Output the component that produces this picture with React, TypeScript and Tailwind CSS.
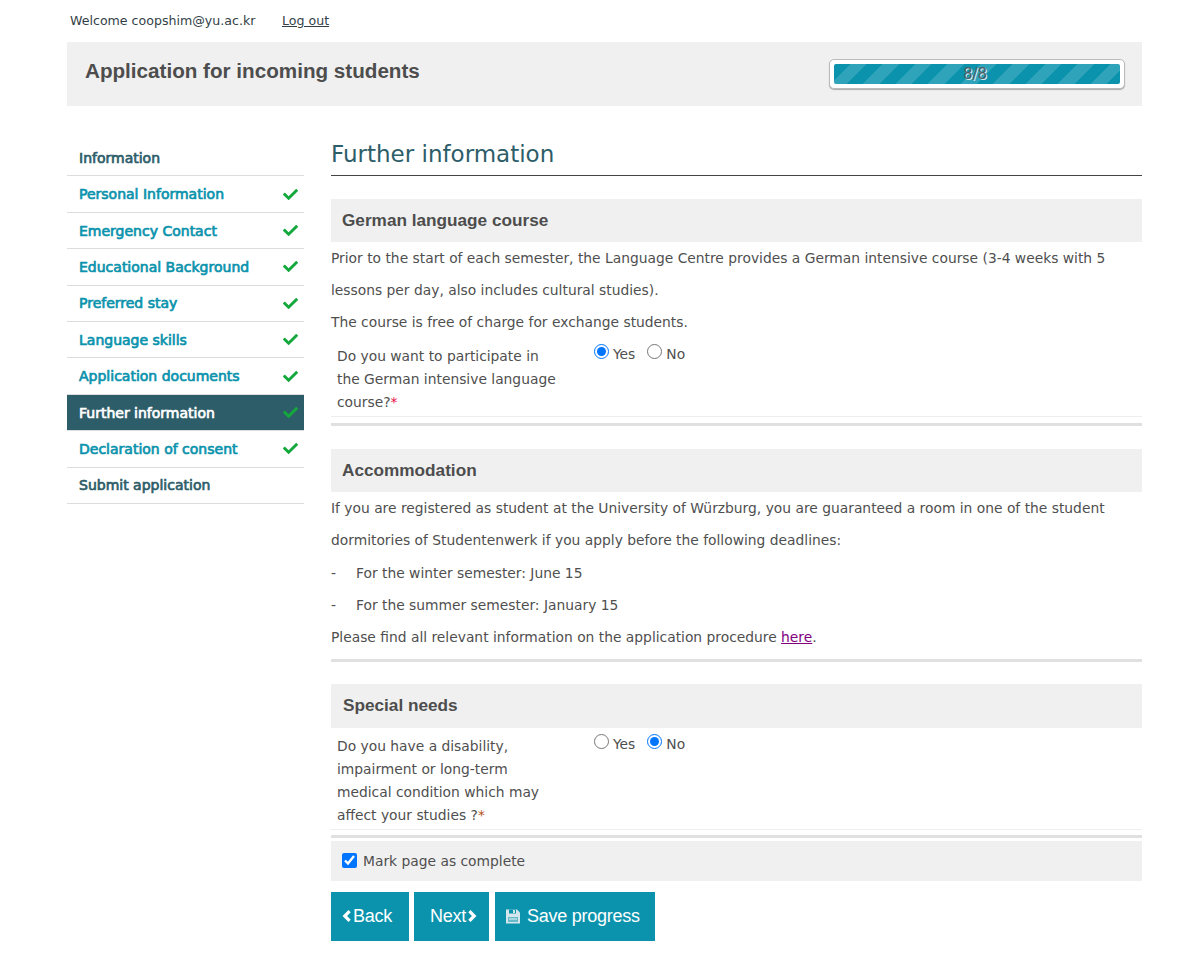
import { FaCheck } from "react-icons/fa";

const steps = [
  { label: "Information", done: false, link: false },
  { label: "Personal Information", done: true, link: true },
  { label: "Emergency Contact", done: true, link: true },
  { label: "Educational Background", done: true, link: true },
  { label: "Preferred stay", done: true, link: true },
  { label: "Language skills", done: true, link: true },
  { label: "Application documents", done: true, link: true },
  { label: "Further information", done: true, link: true, active: true },
  { label: "Declaration of consent", done: true, link: true },
  { label: "Submit application", done: false, link: false },
];

function SideItem({ label, done, link, active }: { label: string; done: boolean; link: boolean; active?: boolean }) {
  return (
    <div
      className={`flex h-[36.4px] items-center justify-between border-b border-[#dddddd] pl-3 pr-[6px] text-[14px] ${
        active ? "bg-[#2d5d69] text-white" : link ? "text-[#0b93ad]" : "text-[#2d5d69]"
      }`}
    >
      <span className="pt-[1px] [-webkit-text-stroke:0.7px_currentColor]">{label}</span>
      {done && <FaCheck size={15} className="text-[#14a83c]" />}
    </div>
  );
}

function SectionHead({ children, box = "h-[43px] pl-[11px]" }: { children: React.ReactNode; box?: string }) {
  return (
    <h2 className={`flex items-center bg-[#f0f0f0] font-['Liberation_Sans',sans-serif] text-[17.2px] font-bold text-[#4d4d4d] ${box}`}>
      {children}
    </h2>
  );
}

function Radio({ checked, label }: { checked: boolean; label: string }) {
  return (
    <label className="flex items-start gap-[4px]">
      <input type="radio" readOnly checked={checked} className="h-[15px] w-[15px] accent-[#0075ff]" />
      <span className="leading-[20px]">{label}</span>
    </label>
  );
}

function Question({ children, yes }: { children: React.ReactNode; yes: boolean }) {
  return (
    <div className="flex border-b border-[#eeeeee] pb-[2px]">
      <div className="w-[263px] pl-[6px] pr-[37px] leading-[23px]">{children}</div>
      <div className="-mt-[1px] flex gap-[12px]">
        <Radio checked={yes} label="Yes" />
        <Radio checked={!yes} label="No" />
      </div>
    </div>
  );
}

function TealButton({ children, className }: { children: React.ReactNode; className: string }) {
  return (
    <button
      className={`flex h-[49px] items-center bg-[#0b93ad] font-['Liberation_Sans',sans-serif] text-[18px] tracking-[-0.25px] text-white ${className}`}
    >
      {children}
    </button>
  );
}

function Chevron({ dir }: { dir: "left" | "right" }) {
  return (
    <svg width="10" height="12" viewBox="0 0 10 12" fill="none" className={dir === "right" ? "rotate-180" : ""}>
      <path d="M7.6 1.2 2.8 6l4.8 4.8" stroke="#ffffff" strokeWidth="3.2" />
    </svg>
  );
}

function FloppyIcon() {
  return (
    <svg width="14" height="15" viewBox="0 0 14 15">
      <path d="M0 0.5h11l3 3v11H0z" fill="#d4e6eb" />
      <rect x="3" y="0.5" width="7" height="4" fill="#0b93ad" />
      <rect x="7" y="1" width="2" height="3" fill="#d4e6eb" />
      <rect x="2" y="8" width="10" height="5" fill="#0b93ad" opacity="0.55" />
      <rect x="3" y="9.5" width="8" height="1" fill="#eaf4f6" />
    </svg>
  );
}

export default function App() {
  return (
    <div className="h-[965px] w-[1204px] bg-white pl-[67px] pr-[62px] font-['DejaVu_Sans',sans-serif] text-[13.84px] text-[#4f4f4f]">
      <div className="flex h-[42px] items-center pl-[3px] text-[12.6px] text-[#333f48]">
        <span className="w-[212px]">Welcome coopshim@yu.ac.kr</span>
        <a className="underline">Log out</a>
      </div>

      <header className="flex h-[64px] items-start justify-between bg-[#f0f0f0] pl-[18px] pr-[17px]">
        <h1 className="mt-4 font-['Liberation_Sans',sans-serif] text-[20.65px] leading-[26px] font-bold text-[#4d4d4d]">
          Application for incoming students
        </h1>
        <div className="mt-[17px] h-[30px] w-[296px] rounded-[5px] border border-[#bbbbbb] bg-white p-[4px] shadow-[0_1px_1px_#aaaaaa]">
          <div className="flex h-[20px] items-center justify-center rounded-[2px] bg-[#0b93ad] bg-[repeating-linear-gradient(135deg,#0b93ad_0_11.5px,#2fa3ba_11.5px_23px)] pr-[4px] text-[15px] text-[#4f5f66] [text-shadow:1px_1px_0_#d5edf2]">
            8/8
          </div>
        </div>
      </header>

      <div className="mt-[34.1px] flex gap-[27px]">
        <nav className="w-[237px]">
          {steps.map((s) => (
            <SideItem key={s.label} {...s} />
          ))}
        </nav>

        <main className="-mt-[0.1px] w-[811px]">
          <h1 className="h-[36px] border-b border-[#444444] text-[23px] leading-[28px] text-[#2d5d69]">Further information</h1>

          <section className="mt-[23px] border-b-[3px] border-[#e0e0e0] pb-[6px]">
            <SectionHead>German language course</SectionHead>
            <div className="leading-[32px]">
              <p>Prior to the start of each semester, the Language Centre provides a German intensive course (3-4 weeks with 5 lessons per day, also includes cultural studies).</p>
              <p>The course is free of charge for exchange students.</p>
            </div>
            <div className="mt-[7px]">
              <Question yes>
                Do you want to participate in the German intensive language course?<span className="text-[#e8114b]">*</span>
              </Question>
            </div>
          </section>

          <section className="mt-[23px] border-b-[3px] border-[#e0e0e0] pb-[6px]">
            <SectionHead>Accommodation</SectionHead>
            <div className="pt-[0.4px] leading-[32.1px]">
              <p>If you are registered as student at the University of Würzburg, you are guaranteed a room in one of the student dormitories of Studentenwerk if you apply before the following deadlines:</p>
              <p className="flex"><span className="w-[25px]">-</span>For the winter semester: June 15</p>
              <p className="flex"><span className="w-[25px]">-</span>For the summer semester: January 15</p>
              <p>
                Please find all relevant information on the application procedure <a className="text-[#800080] underline">here</a>.
              </p>
            </div>
          </section>

          <section className="mt-[22px] border-b-[3px] border-[#e0e0e0] pb-[5px]">
            <SectionHead box="h-[44px] pl-[12px]">Special needs</SectionHead>
            <div className="mt-[7px]">
              <Question yes={false}>
                Do you have a disability, impairment or long-term medical condition which may affect your studies ?<span className="text-[#b5541c]">*</span>
              </Question>
            </div>
          </section>

          <label className="mt-[3px] flex h-[40px] items-center gap-[6px] bg-[#f0f0f0] pl-[11px]">
            <input type="checkbox" readOnly checked className="h-[15px] w-[15px] accent-[#0075ff]" />
            <span className="pt-[1px]">Mark page as complete</span>
          </label>

          <div className="mt-[11px] flex">
            <TealButton className="w-[78px] gap-[1px] pl-[11px]">
              <Chevron dir="left" />
              Back
            </TealButton>
            <TealButton className="ml-[5px] w-[75px] gap-[1px] pl-[16px]">
              Next
              <Chevron dir="right" />
            </TealButton>
            <TealButton className="ml-[6px] w-[160px] gap-[7px] pl-[11px]">
              <FloppyIcon />
              Save progress
            </TealButton>
          </div>
        </main>
      </div>
    </div>
  );
}
